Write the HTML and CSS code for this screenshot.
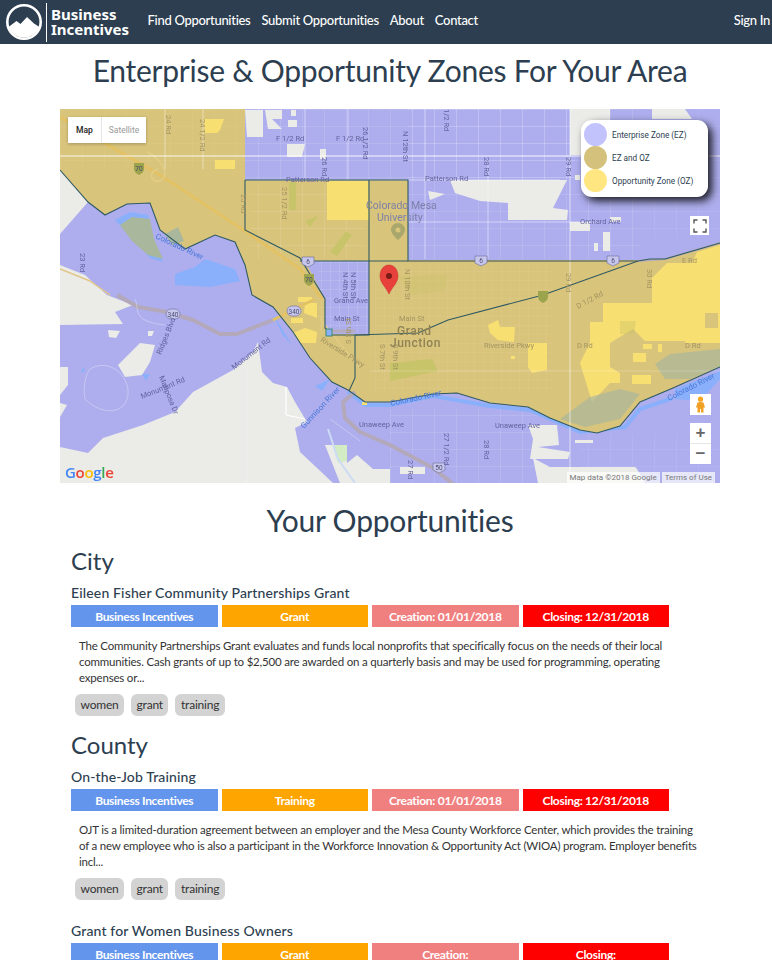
FILE: index.html
```html
<!DOCTYPE html>
<html lang="en">
<head>
    <meta charset="UTF-8">
    <meta name="viewport" content="width=device-width, initial-scale=1.0">
    <title>Business Incentives</title>
    <link rel="stylesheet" href="styles.css">
</head>
<body>

<nav class="navbar">
    <a class="brand" href="#">
        <svg class="brand-logo" viewBox="0 0 38 38" width="38" height="38">
            <circle cx="19" cy="19" r="16.7" fill="none" stroke="#fff" stroke-width="2.6"/>
            <path d="M3.5 24L11.5 18L15.5 21L22 14L29 20.5L34.5 24A16.5 16.5 0 0 1 3.5 24Z" fill="#fff"/>
        </svg>
        <span class="brand-text">Business<br>Incentives</span>
    </a>
    <a class="nav-link" href="#">Find Opportunities</a>
    <a class="nav-link" href="#">Submit Opportunities</a>
    <a class="nav-link" href="#">About</a>
    <a class="nav-link" href="#">Contact</a>
    <a class="nav-link sign-in" href="#">Sign In</a>
</nav>

<main class="content">
    <h1>Enterprise &amp; Opportunity Zones For Your Area</h1>

    <div class="map">
        <svg class="map-canvas" viewBox="0 0 660 374" width="660" height="374">
            <defs>
                <pattern id="blocks" width="9" height="9" patternUnits="userSpaceOnUse">
                    <path d="M0 0H9M0 0V9" stroke="#fff" stroke-opacity=".22" fill="none"/>
                </pattern>
                <pattern id="wideBlocks" width="22" height="17" patternUnits="userSpaceOnUse">
                    <path d="M0 0H22M0 0V17" stroke="#fff" stroke-opacity=".22" fill="none"/>
                </pattern>
            </defs>

            <rect width="660" height="374" fill="#aeaeee"/>

            <!-- streets on the purple side -->
            <rect x="185" y="0" width="330" height="71" fill="url(#wideBlocks)"/>
            <rect x="348" y="0" width="232" height="150" fill="url(#wideBlocks)"/>
            <rect x="580" y="0" width="80" height="130" fill="url(#wideBlocks)" opacity=".6"/>
            <rect x="330" y="300" width="150" height="74" fill="url(#wideBlocks)"/>
            <rect x="520" y="325" width="140" height="49" fill="url(#wideBlocks)" opacity=".6"/>

            <!-- unzoned land -->
            <g fill="#ebebe8">
                <path d="M0 61L28 93L0 125Z"/>
                <path d="M0 156L25 166L47 186L73 196L55 203L63 215L0 216Z"/>
                <path d="M58 256L80 234L95 236L90 253L82 266L65 268Z"/>
                <path d="M0 258H8V276L0 286Z"/>
                <path d="M0 294L7 296L0 308Z"/>
                <path d="M48 221L60 222L56 229L49 228Z"/>
                <path d="M88 222L94 222L92 227L88 227Z"/>
                <path d="M0 338L28 344L43 329L83 316L115 303L133 283L173 261L193 243L198 233L202 263L213 274L227 278L235 293L247 313L235 319L240 343L273 374H0Z"/>
                <path d="M265 336H287V354L297 346L313 360H330V374H280Z"/>
                <path d="M185 1H203V28H187Z"/>
                <path d="M205 1H222V10H212L222 20H208Z"/>
                <path d="M227 35H245L242 48H227Z"/>
                <path d="M228 11H237V18H228Z"/>
                <path d="M231 1H236V7H231Z"/>
                <path d="M260 40H266V50H260Z"/>
                <path d="M390 71H507L493 99L508 101L507 111H448V94L420 92L395 84Z"/>
                <path d="M368 82L385 85L370 91Z"/>
                <path d="M510 0H550V30L520 46H510Z"/>
                <path d="M592 0H625L632 10H592Z"/>
                <path d="M510 113H530V122H510Z"/>
                <path d="M543 123H550V142H543Z"/>
                <path d="M534 134H538V142H534Z"/>
                <path d="M550 108H561V113H550Z"/>
                <path d="M515 66H520V71H515Z"/>
                <path d="M468 316H497L499 336L478 338L510 343L508 350H470L473 330Z"/>
                <path d="M515 331H533V334H515Z"/>
                <path d="M473 349L490 358H575L577 360L585 374H478Z"/>
                <path d="M340 358H365V365H340Z"/>
            </g>
            <path d="M273 336H287V352L278 354Z" fill="#d3ecc4"/>

            <!-- water under the zones -->
            <g fill="#8ab0fb">
                <path d="M55 111L70 103L88 106L93 129L103 153L90 149L72 129Z"/>
                <path d="M115 165L135 158L145 150L175 160L180 172L150 178L115 176Z"/>
                <path d="M213 205L232 236L254 262L240 245L222 225Z"/>
                <path d="M255 277L270 270L262 282Z"/>
                <path d="M82 265L90 265L86 272Z"/>
                <path d="M23 258L25 262L21 264Z"/>
                <path d="M615 280L660 262V270L640 292L615 290Z"/>
            </g>
            <path d="M288 283L305 296L330 296L373 287L430 297L470 301L520 323L565 318L580 300L613 289" fill="none" stroke="#8ab0fb" stroke-width="4"/>
            <path d="M268 320L278 350L295 374" fill="none" stroke="#cbdcf4" stroke-width="2"/>

            <!-- zones -->
            <path d="M0 0H185V71H348V152H578L590 150L605 150L660 134V258L613 279L580 293L560 317L537 324L520 321L490 309L468 298L430 294L397 284L373 285L330 293L305 293L288 281L272 273L250 249L233 223L213 198L192 186L185 156L175 133L155 126L125 140L100 121L90 94L67 95L45 106L28 93L0 61Z" fill="#d9c47b"/>
            <path d="M245 152H309V225H272L265 219V190Z" fill="#aeaeee"/>
            <rect x="258" y="152" width="50" height="72" fill="url(#blocks)"/>
            <rect x="190" y="75" width="116" height="75" fill="url(#wideBlocks)"/>
            <rect x="312" y="155" width="180" height="130" fill="url(#blocks)" opacity=".45"/>
            <rect x="0" y="0" width="184" height="60" fill="url(#wideBlocks)" opacity=".4"/>

            <!-- opportunity zone only -->
            <g fill="#f8df72">
                <path d="M144 10H164L160 21L157 24H145Z"/>
                <path d="M155 51H175V60H155Z"/>
                <path d="M267 72H308L309 111H267Z"/>
                <path d="M238 188H252V193H238Z"/>
                <path d="M245 194H257V209L244 204Z"/>
                <path d="M231 209H243V214H231Z"/>
                <path d="M233 224L245 219L257 223L256 234H240Z"/>
                <path d="M428 216L438 211L440 218H455L454 233L438 231L430 224Z"/>
                <path d="M468 234H487V261L472 264L468 258Z"/>
                <path d="M451 247H455V250H451Z"/>
                <path d="M520 254L530 234H550V258L560 264V274H550L532 293Z"/>
                <path d="M530 213H543V194H592V186H660V234H625V232H585L573 220L550 234H530Z"/>
                <path d="M592 186V169L607 154H632L637 143L660 136V186Z"/>
                <path d="M573 244H586V253H573Z"/>
                <path d="M572 266H591V275H572Z"/>
                <path d="M598 235H602V243H598Z"/>
                <path d="M583 235H592V240H583Z"/>
                <path d="M302 293H307V296H302Z"/>
            </g>
            <path d="M645 204H658V219H645Z" fill="#d9c47b"/>

            <!-- parks and water seen through the gold -->
            <g fill="#a9b89c">
                <path d="M60 116L72 108L90 110L94 130L103 150L88 146L72 132Z"/>
                <path d="M105 125L118 118L124 132L112 136Z"/>
                <path d="M500 310L530 288L560 280L580 285L560 310L525 318Z" opacity=".7"/>
                <path d="M595 255L610 245L640 242L660 240V258L630 270L605 270Z" opacity=".7"/>
            </g>
            <g fill="#c8c46a">
                <path d="M229 73H236V101H229Z"/>
                <path d="M245 112L258 107L250 118Z"/>
                <path d="M270 143L286 122L292 126L277 147Z"/>
                <path d="M330 254L372 250L378 262L330 272Z"/>
                <path d="M340 168L388 165L384 182L350 186Z" opacity=".35"/>
                <path d="M560 212L576 212L574 225L560 225Z" opacity=".4"/>
            </g>

            <!-- roads -->
            <g fill="none" stroke-linejoin="round">
                <path d="M0 8L55 40L100 66L185 122L240 160L262 190" stroke="#e3c265" stroke-width="3"/>
                <path d="M88 43C100 50 112 66 100 72C90 74 88 62 98 60" stroke="#e3cd86" stroke-width="1.5"/>
                <path d="M0 160L30 172L50 186" stroke="#e2c68a" stroke-width="1.5"/>
                <path d="M57 186L78 198L107 203L133 211L160 225H177L213 211" stroke="#b3a9bb" stroke-width="4"/>
                <path d="M213 211L255 190" stroke="#e3c265" stroke-width="3"/>
                <path d="M295 283L283 293L285 309L300 323L330 336L373 359L392 374" stroke="#b3a9bb" stroke-width="4"/>
                <path d="M348 152H578" stroke="#dfbe72" stroke-width="2"/>
                <path d="M578 152L605 150L660 134" stroke="#b5acbc" stroke-width="2"/>
                <path d="M272 222H295" stroke="#b5acbc" stroke-width="3"/>
                <path d="M0 47H660" stroke="#fff" stroke-width="1" stroke-opacity=".9"/>
                <path d="M185 71H348" stroke="#c9c4c9" stroke-width="1"/>
                <path d="M348 71H500" stroke="#fff" stroke-opacity=".5"/>
                <path d="M510 0V374" stroke="#fff" stroke-opacity=".3" stroke-width="2"/>
                <path d="M105 0V60M143 0V60M245 0V71M288 0V71M365 0V150M428 50V150" stroke="#fff" stroke-opacity=".3" stroke-width="1.5"/>
                <path d="M348 113H540" stroke="#fff" stroke-opacity=".3" stroke-width="1.5"/>
                <path d="M310 262H660" stroke="#fff" stroke-opacity=".15" stroke-width="1.5"/>
                <path d="M270 310L300 332" stroke="#fff" stroke-opacity=".3"/>
                <path d="M226 278V306M226 306L245 310" stroke="#fff" stroke-width="1.2"/>
                <path d="M187 257V374" stroke="#fff" stroke-opacity=".25"/>
                <path d="M30 260C55 245 80 280 62 298C50 306 35 300 25 290C22 275 28 262 30 260Z" stroke="#fff" stroke-opacity=".3"/>
                <path d="M75 190C80 200 70 212 105 216" stroke="#fff" stroke-opacity=".3"/>
                <path d="M260 210L299 258" stroke="#e3cd86" stroke-width="1.2"/>
            </g>

            <!-- zone boundaries -->
            <g fill="none" stroke="#2f5a63" stroke-width="1.1">
                <path d="M0 61L28 93L45 106L67 95L90 94L100 121L125 140L155 126L175 133L185 156L192 186L213 198L233 223L250 249L272 273L288 281L305 293H330L373 285L397 284L430 294L468 298L490 309L520 321L537 324L560 317L580 293L613 279L660 258"/>
                <path d="M185 71H348V152H578L590 150L605 150L660 134"/>
                <path d="M185 71V121L240 149L265 190V219L272 226H309V71"/>
                <path d="M240 152H348"/>
                <path d="M295 226V269L289 282"/>
                <path d="M578 152L483 186L388 211L358 224L295 226"/>
            </g>
            <rect x="266" y="220" width="6" height="7" fill="#8ab0fb" stroke="#3d8a78"/>

            <!-- shields -->
            <g class="shield-green">
                <path d="M74 54H84V60C84 63 81 65 79 66C77 65 74 63 74 60Z"/>
                <path d="M244 165H254V171C254 174 251 176 249 177C247 176 244 174 244 171Z"/>
                <path d="M478 182H488V188C488 191 485 193 483 194C481 193 478 191 478 188Z"/>
            </g>
            <g class="shield">
                <path d="M242 148H254V155L248 158L242 155Z"/>
                <path d="M415 147H427V154L421 157L415 154Z"/>
                <path d="M547 147H559V154L553 157L547 154Z"/>
                <path d="M373 354H385V361L379 364L373 361Z"/>
                <rect x="106" y="200" width="14" height="10" rx="5"/>
                <rect x="227" y="197" width="14" height="10" rx="5"/>
            </g>
            <g class="shield-text">
                <text x="79" y="62">70</text>
                <text x="249" y="173">70</text>
                <text x="248" y="155">6</text>
                <text x="421" y="154">6</text>
                <text x="553" y="154">6</text>
                <text x="379" y="361">50</text>
                <text x="113" y="207.5">340</text>
                <text x="234" y="204.5">340</text>
            </g>

            <!-- labels -->
            <g class="road-label">
                <text x="216" y="32">F 1/2 Rd</text>
                <text x="276" y="32">F 1/2 Rd</text>
                <text x="226" y="73">Patterson Rd</text>
                <text x="365" y="72">Patterson Rd</text>
                <text x="520" y="115">Orchard Ave</text>
                <text x="274" y="194">Grand Ave</text>
                <text x="274" y="212">Main St</text>
                <text x="339" y="212" class="on-gold">Main St</text>
                <text x="424" y="239" class="on-gold">Riverside Pkwy</text>
                <text x="517" y="239" class="on-gold">D Rd</text>
                <text x="625" y="239" class="on-gold">D Rd</text>
                <text x="622" y="154" class="on-gold">E Rd</text>
                <text x="435" y="319">Unaweep Ave</text>
                <text x="299" y="318">Unaweep Ave</text>
                <text transform="translate(518 200) rotate(-28)" class="on-gold">D 1/2 Rd</text>
                <text transform="translate(260 232) rotate(32)" class="on-gold">Riverside Pkwy</text>
                <text transform="translate(82 290) rotate(-22)">Monument Rd</text>
                <text transform="translate(174 261) rotate(-38)">Monument Rd</text>
                <text transform="translate(99 268) rotate(68)">Mariposa Dr</text>
                <text transform="translate(101 246) rotate(-68)">Ridges Blvd</text>
                <text transform="translate(106 6) rotate(90)" class="on-gold">24 Rd</text>
                <text transform="translate(140 10) rotate(90)" class="on-gold">24 1/2 Rd</text>
                <text transform="translate(181 85) rotate(90)" class="on-gold">25 Rd</text>
                <text transform="translate(222 78) rotate(90)" class="on-gold">25 1/2 Rd</text>
                <text transform="translate(262 48) rotate(90)">26 Rd</text>
                <text transform="translate(303 18) rotate(90)">26 1/2 Rd</text>
                <text transform="translate(20 144) rotate(90)">23 Rd</text>
                <text transform="translate(343 22) rotate(90)">N 12th St</text>
                <text transform="translate(384 0) rotate(90)">1/2 Rd</text>
                <text transform="translate(424 48) rotate(90)">28 Rd</text>
                <text transform="translate(506 48) rotate(90)">29 Rd</text>
                <text transform="translate(506 164) rotate(90)" class="on-gold">29 Rd</text>
                <text transform="translate(587 160) rotate(90)" class="on-gold">30 Rd</text>
                <text transform="translate(283 163) rotate(90)">N 4th St</text>
                <text transform="translate(291 163) rotate(90)">N 5th St</text>
                <text transform="translate(291 235) rotate(-90)" class="on-gold">S 5th St</text>
                <text transform="translate(320 235) rotate(90)" class="on-gold">S 7th St</text>
                <text transform="translate(333 235) rotate(90)" class="on-gold">S 9th St</text>
                <text transform="translate(345 160) rotate(90)" class="on-gold">N 10th St</text>
                <text transform="translate(384 324) rotate(90)">27 1/2 Rd</text>
                <text transform="translate(424 331) rotate(90)">28 Rd</text>
                <text transform="translate(348 351) rotate(90)">27 Rd</text>
            </g>
            <g class="water-label">
                <text transform="translate(95 129) rotate(25)">Colorado River</text>
                <text transform="translate(331 297) rotate(-12)">Colorado River</text>
                <text transform="translate(609 292) rotate(-27)">Colorado River</text>
                <text transform="translate(244 320) rotate(-47)">Gunnison River</text>
            </g>
            <g class="place-label">
                <text x="306" y="100">Colorado Mesa</text>
                <text x="317" y="112">University</text>
            </g>
            <text class="city-label" x="337" y="226">Grand</text>
            <text class="city-label" x="330" y="238">Junction</text>
            <path d="M338 114C334 114 331 117 331 121C331 125 338 131 338 131C338 131 345 125 345 121C345 117 342 114 338 114Z" fill="#a9a76c"/>
            <circle cx="338" cy="121" r="2.5" fill="#d9c47b"/>

            <!-- marker -->
            <path d="M329 156C322 156 320 163 320 167C320 174 326 178 329 185C332 178 338 174 338 167C338 163 336 156 329 156Z" fill="#e8403a" stroke="#c5302c" stroke-width=".5"/>
            <circle cx="329" cy="167" r="3" fill="#7c1a18"/>

            <text class="google" x="5" y="369"><tspan fill="#4285f4">G</tspan><tspan fill="#ea4335">o</tspan><tspan fill="#fbbc05">o</tspan><tspan fill="#4285f4">g</tspan><tspan fill="#34a853">l</tspan><tspan fill="#ea4335">e</tspan></text>
        </svg>

        <div class="map-type">
            <span class="map-type-active">Map</span>
            <span class="map-type-other">Satellite</span>
        </div>

        <div class="legend">
            <div class="legend-row"><span class="dot dot-ez"></span>Enterprise Zone (EZ)</div>
            <div class="legend-row"><span class="dot dot-both"></span>EZ and OZ</div>
            <div class="legend-row"><span class="dot dot-oz"></span>Opportunity Zone (OZ)</div>
        </div>

        <div class="map-button fullscreen">
            <svg viewBox="0 0 18 18" width="18" height="18">
                <path d="M3 6.5V3H6.5M11.5 3H15V6.5M15 11.5V15H11.5M6.5 15H3V11.5" fill="none" stroke="#555" stroke-width="1.4"/>
            </svg>
        </div>

        <div class="map-button pegman">
            <svg viewBox="0 0 21 21" width="21" height="21">
                <circle cx="10.5" cy="5.2" r="2.6" fill="#f5a623"/>
                <path d="M7.5 8.5C9 7.8 12 7.8 13.5 8.5L15 13.5H13.5V18.5H11V15H10V18.5H7.5V13.5H6Z" fill="#f0a022"/>
            </svg>
        </div>

        <div class="map-button zoom">
            <div class="zoom-in">+</div>
            <div class="zoom-out">−</div>
        </div>

        <div class="attribution">
            <span>Map data ©2018 Google</span>
            <span>Terms of Use</span>
        </div>
    </div>

    <h2>Your Opportunities</h2>

    <section class="category">
        <h3>City</h3>
        <article class="opportunity">
            <h4>Eileen Fisher Community Partnerships Grant</h4>
            <div class="badges">
                <span class="badge badge-source">Business Incentives</span>
                <span class="badge badge-type">Grant</span>
                <span class="badge badge-created">Creation: 01/01/2018</span>
                <span class="badge badge-closing">Closing: 12/31/2018</span>
            </div>
            <p>The Community Partnerships Grant evaluates and funds local nonprofits that specifically focus on the needs of their local communities. Cash grants of up to $2,500 are awarded on a quarterly basis and may be used for programming, operating expenses or...</p>
            <div class="tags">
                <span class="tag">women</span>
                <span class="tag">grant</span>
                <span class="tag">training</span>
            </div>
        </article>
    </section>

    <section class="category">
        <h3>County</h3>
        <article class="opportunity">
            <h4>On-the-Job Training</h4>
            <div class="badges">
                <span class="badge badge-source">Business Incentives</span>
                <span class="badge badge-type">Training</span>
                <span class="badge badge-created">Creation: 01/01/2018</span>
                <span class="badge badge-closing">Closing: 12/31/2018</span>
            </div>
            <p>OJT is a limited-duration agreement between an employer and the Mesa County Workforce Center, which provides the training of a new employee who is also a participant in the Workforce Innovation &amp; Opportunity Act (WIOA) program. Employer benefits incl...</p>
            <div class="tags">
                <span class="tag">women</span>
                <span class="tag">grant</span>
                <span class="tag">training</span>
            </div>
        </article>
        <article class="opportunity">
            <h4>Grant for Women Business Owners</h4>
            <div class="badges">
                <span class="badge badge-source">Business Incentives</span>
                <span class="badge badge-type">Grant</span>
                <span class="badge badge-created">Creation:</span>
                <span class="badge badge-closing">Closing:</span>
            </div>
        </article>
    </section>
</main>

</body>
</html>
```

FILE: styles.css
```css
html, body {
    height: 100%;
    overflow: hidden;
}
body {
    font-family: 'Lato', sans-serif;
    font-variant-ligatures: none;
    color: #2c3e50;
    background: #fff;
    margin: 0;
}
.navbar {
    display: flex;
    align-items: center;
    height: 44px;
    background: #2c3e50;
    padding: 0 2px 0 5px;
}
.brand {
    display: flex;
    align-items: center;
    color: #fff;
    text-decoration: none;
    margin-right: 13px;
}
.brand-logo {
    display: block;
}
.brand-text {
    font-family: 'Noto Sans', sans-serif;
    font-weight: 700;
    font-size: 15px;
    line-height: 15px;
    border-left: 1px solid #fff;
    padding: 4px 0 5px 4px;
    margin-left: 3px;
    height: 30px;
}
.nav-link {
    color: #fff;
    text-decoration: none;
    font-size: 13px;
    font-weight: 500;
    letter-spacing: -.3px;
    margin: 0 5.5px 4px;
}
.sign-in {
    margin-left: auto;
    margin-right: 0;
}
.content {
    width: 660px;
    margin-left: 60px;
}
h1 {
    font-size: 30px;
    font-weight: 400;
    line-height: 36px;
    letter-spacing: -.25px;
    text-align: center;
    margin: 8px 0 21px;
}
.map {
    position: relative;
    width: 660px;
    height: 374px;
    overflow: hidden;
}
.map-canvas {
    display: block;
    filter: blur(.4px);
}
.map-canvas text {
    font-family: 'Roboto', sans-serif;
}
.road-label text {
    font-size: 7.5px;
    fill: #63639f;
}
.road-label .on-gold {
    fill: #a39562;
}
.water-label text {
    font-size: 8px;
    fill: #4a78d8;
}
.place-label text {
    font-size: 10.5px;
    fill: #7d80a8;
}
.map-canvas .city-label {
    font-size: 12px;
    font-weight: 500;
    letter-spacing: .5px;
    fill: #8f8356;
}
.shield path, .shield rect {
    fill: #c7c7ee;
    stroke: #6a6a98;
    stroke-width: .6;
}
.shield-green path {
    fill: #9ba34c;
}
.shield-text text {
    font-size: 6.5px;
    text-anchor: middle;
    fill: #4b4b70;
}
.map-canvas .google {
    font-family: 'Open Sans', sans-serif;
    font-size: 15px;
    font-weight: 600;
    letter-spacing: -.3px;
}
.map-type {
    position: absolute;
    left: 8px;
    top: 8px;
    display: flex;
    height: 26px;
    background: #fff;
    box-shadow: 0 1px 3px rgba(0, 0, 0, 0.25);
    font-family: 'Roboto', sans-serif;
    font-size: 8.5px;
    line-height: 26px;
}
.map-type-active {
    width: 33px;
    text-align: center;
    font-weight: 500;
    color: #222;
    border-right: 1px solid #e6e6e6;
}
.map-type-other {
    width: 44px;
    text-align: center;
    color: #999;
}
.legend {
    position: absolute;
    left: 521px;
    top: 11px;
    width: 127px;
    height: 77px;
    box-sizing: border-box;
    background: #fff;
    border-radius: 11px;
    box-shadow: 4px 4px 8px rgba(0, 0, 0, 0.85);
    padding: 3px 0 0 3px;
    font-family: 'Roboto', sans-serif;
    font-size: 8.2px;
    color: #2c3e50;
}
.legend-row {
    display: flex;
    align-items: center;
    height: 23px;
}
.dot {
    width: 23px;
    height: 23px;
    border-radius: 50%;
    margin-right: 5px;
}
.dot-ez {
    background: #c2c2fd;
}
.dot-both {
    background: #d4c27c;
}
.dot-oz {
    background: #ffe680;
}
.map-button {
    position: absolute;
    background: #fff;
}
.fullscreen {
    left: 630px;
    top: 107px;
    width: 19px;
    height: 19px;
    display: flex;
    align-items: center;
    justify-content: center;
}
.pegman {
    left: 630px;
    top: 285px;
    width: 21px;
    height: 21px;
}
.pegman svg {
    display: block;
}
.zoom {
    left: 630px;
    top: 314px;
    width: 21px;
    height: 41px;
    font-family: 'Liberation Sans', sans-serif;
    font-size: 17px;
    font-weight: 700;
    line-height: 20px;
    text-align: center;
    color: #666;
}
.zoom-in {
    height: 20px;
    border-bottom: 1px solid #e6e6e6;
}
.attribution {
    position: absolute;
    right: 5px;
    bottom: 0;
    display: flex;
    gap: 2px;
    font-family: 'Roboto', sans-serif;
    font-size: 8px;
    line-height: 11px;
    color: #777;
}
.attribution span {
    background: rgba(255, 255, 255, 0.7);
    padding: 0 3px;
}
h2 {
    font-size: 30px;
    font-weight: 400;
    line-height: 30px;
    letter-spacing: -.2px;
    text-align: center;
    margin: 22px 0 12px;
}
.category {
    padding-left: 11px;
}
.category + .category {
    margin-top: 15px;
}
h3 {
    font-size: 24px;
    font-weight: 400;
    line-height: 27px;
    margin: 0 0 10px;
}
h4 {
    font-size: 14px;
    font-weight: 500;
    line-height: 17px;
    letter-spacing: .15px;
    margin: 0 0 4px;
}
.opportunity + .opportunity {
    margin-top: 22px;
}
.badges {
    display: grid;
    grid-template-columns: repeat(4, 1fr);
    gap: 4px;
    width: 598px;
}
.badge {
    height: 22px;
    line-height: 23px;
    text-align: center;
    color: #fff;
    font-size: 12px;
    font-weight: 700;
    letter-spacing: -.3px;
}
.badge-source {
    background: cornflowerblue;
}
.badge-type {
    background: orange;
}
.badge-created {
    background: lightcoral;
}
.badge-closing {
    background: red;
}
.opportunity p {
    font-size: 11.5px;
    line-height: 16px;
    letter-spacing: -.2px;
    color: #333;
    margin: 11px 0 8px 8px;
    width: 625px;
}
.tags {
    display: flex;
    gap: 7px;
    padding-left: 4px;
}
.tag {
    height: 22px;
    line-height: 22px;
    padding: 0 5.5px;
    background: lightgray;
    border-radius: 6px;
    font-size: 12px;
    letter-spacing: -.2px;
    color: #333;
}
```
